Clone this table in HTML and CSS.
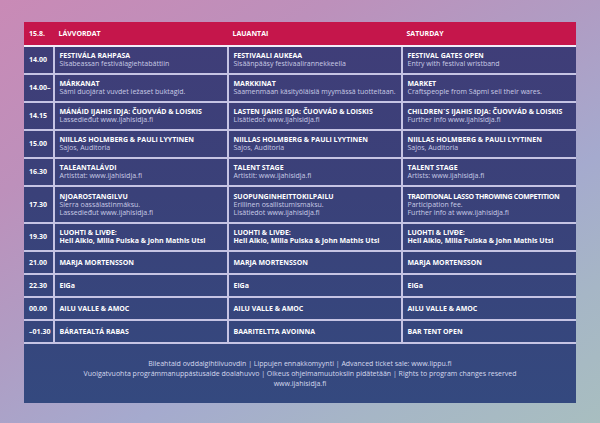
FILE: index.html
```html
<!DOCTYPE html>
<html lang="fi">
<head>
<meta charset="utf-8">
<title>Ijahis Idja – ohjelma</title>
<link rel="stylesheet" href="styles.css">
</head>
<body>
<div class="sheet">
  <table class="prog">
    <colgroup><col class="c-time"><col class="c-day"><col class="c-day"><col class="c-day"></colgroup>
    <thead>
      <tr><th class="time">15.8.</th><th>LÁVVORDAT</th><th>LAUANTAI</th><th>SATURDAY</th></tr>
    </thead>
    <tbody>
      <tr class="r2">
        <td class="time">14.00</td>
        <td><b>FESTIVÁLA RAHPASA</b><span>Sisabeassan festiválagiehtabáttiin</span></td>
        <td><b>FESTIVAALI AUKEAA</b><span>Sisäänpääsy festivaalirannekkeella</span></td>
        <td><b>FESTIVAL GATES OPEN</b><span>Entry with festival wristband</span></td>
      </tr>
      <tr class="r2">
        <td class="time">14.00–</td>
        <td><b>MÁRKANAT</b><span>Sámi duojárat vuvdet iežaset buktagid.</span></td>
        <td><b>MARKKINAT</b><span>Saamenmaan käsityöläisiä myymässä tuotteitaan.</span></td>
        <td><b>MARKET</b><span>Craftspeople from Sápmi sell their wares.</span></td>
      </tr>
      <tr class="r2">
        <td class="time">14.15</td>
        <td><b>MÁNÁID IJAHIS IDJA: ČUOVVÁD &amp; LOISKIS</b><span>Lassedieđut www.ijahisidja.fi</span></td>
        <td><b>LASTEN IJAHIS IDJA: ČUOVVÁD &amp; LOISKIS</b><span>Lisätiedot www.ijahisidja.fi</span></td>
        <td><b>CHILDREN´S IJAHIS IDJA: ČUOVVÁD &amp; LOISKIS</b><span>Further info www.ijahisidja.fi</span></td>
      </tr>
      <tr class="r2">
        <td class="time">15.00</td>
        <td><b>NIILLAS HOLMBERG &amp; PAULI LYYTINEN</b><span>Sajos, Auditoria</span></td>
        <td><b>NIILLAS HOLMBERG &amp; PAULI LYYTINEN</b><span>Sajos, Auditoria</span></td>
        <td><b>NIILLAS HOLMBERG &amp; PAULI LYYTINEN</b><span>Sajos, Auditoria</span></td>
      </tr>
      <tr class="r2">
        <td class="time">16.30</td>
        <td><b>TALEANTALÁVDI</b><span>Artisttat: www.ijahisidja.fi</span></td>
        <td><b>TALENT STAGE</b><span>Artistit: www.ijahisidja.fi</span></td>
        <td><b>TALENT STAGE</b><span>Artists: www.ijahisidja.fi</span></td>
      </tr>
      <tr class="r3">
        <td class="time">17.30</td>
        <td><b>NJOAROSTANGILVU</b><span>Sierra oassálastinmáksu.</span><span>Lassedieđut www.ijahisidja.fi</span></td>
        <td><b>SUOPUNGINHEITTOKILPAILU</b><span>Erillinen osallistumismaksu.</span><span>Lisätiedot www.ijahisidja.fi</span></td>
        <td><b class="tight">TRADITIONAL LASSO THROWING COMPETITION</b><span>Participation fee.</span><span>Further info at www.ijahisidja.fi</span></td>
      </tr>
      <tr class="r2">
        <td class="time">19.30</td>
        <td><b>LUOHTI &amp; LIVĐE:</b><b>Heli Aikio, Milla Pulska &amp; John Mathis Utsi</b></td>
        <td><b>LUOHTI &amp; LIVĐE:</b><b>Heli Aikio, Milla Pulska &amp; John Mathis Utsi</b></td>
        <td><b>LUOHTI &amp; LIVĐE:</b><b>Heli Aikio, Milla Pulska &amp; John Mathis Utsi</b></td>
      </tr>
      <tr class="r1">
        <td class="time">21.00</td>
        <td><b>MARJA MORTENSSON</b></td>
        <td><b>MARJA MORTENSSON</b></td>
        <td><b>MARJA MORTENSSON</b></td>
      </tr>
      <tr class="r1">
        <td class="time">22.30</td>
        <td><b>EiGa</b></td>
        <td><b>EiGa</b></td>
        <td><b>EiGa</b></td>
      </tr>
      <tr class="r1">
        <td class="time">00.00</td>
        <td><b>AILU VALLE &amp; AMOC</b></td>
        <td><b>AILU VALLE &amp; AMOC</b></td>
        <td><b>AILU VALLE &amp; AMOC</b></td>
      </tr>
      <tr class="r1">
        <td class="time">–01.30</td>
        <td><b>BÁRATEALTÁ RABAS</b></td>
        <td><b>BAARITELTTA AVOINNA</b></td>
        <td><b>BAR TENT OPEN</b></td>
      </tr>
    </tbody>
  </table>
  <footer class="foot">
    <p>Bileahtaid ovddalgihtiivuovdin | Lippujen ennakkomyynti | Advanced ticket sale: www.lippu.fi</p>
    <p>Vuoigatvuohta prográmmanuppástusaide doalahuvvo | Oikeus ohjelmamuutoksiin pidätetään | Rights to program changes reserved</p>
    <p>www.ijahisidja.fi</p>
  </footer>
</div>
</body>
</html>
```

FILE: styles.css
```css
html, body {
  margin: 0;
  padding: 0;
}
body {
  width: 600px;
  height: 423px;
  overflow: hidden;
  font-family: "Open Sans", "Noto Sans", "DejaVu Sans", sans-serif;
  font-size: 7px;
  line-height: 8px;
  color: #ffffff;
  background: linear-gradient(150deg, #c98ab6 0%, #bd90bb 25%, #b09cc3 45%, #a5aace 65%, #a6b6c6 82%, #a8bec0 100%);
}
.sheet {
  margin: 22px 0 0 24px;
  width: 552px;
  background: linear-gradient(180deg, #403d78 0%, #3a4179 45%, #34497f 100%);
}
.prog {
  width: 552px;
  border-collapse: collapse;
  table-layout: fixed;
}
.c-time { width: 30px; }
.c-day { width: 174px; }
.prog thead th {
  background: #c5164b;
  height: 23px;
  padding: 0 0 0 4.5px;
  text-align: left;
  font-weight: 700;
  vertical-align: middle;
  border-bottom: 2px solid #f1eef8;
}
.prog thead th.time { padding-left: 5px; }
.prog td {
  padding: 0 0 0 4.5px;
  vertical-align: middle;
  border-bottom: 2px solid #c6c4e4;
  border-left: 2px solid #c6c4e4;
  color: #c9cbe6;
}
.prog td.time {
  border-left: none;
  padding-left: 5px;
  font-weight: 700;
  color: #ffffff;
}
.prog td b {
  display: block;
  font-weight: 700;
  color: #ffffff;
}
.prog td b.tight {
  letter-spacing: -0.3px;
}
.prog td span {
  display: block;
}
.r1 { height: 23px; }
.r2 { height: 28px; }
.r3 { height: 37px; }
.foot {
  height: 59px;
  display: flex;
  flex-direction: column;
  justify-content: center;
  align-items: center;
  color: #d6d9ee;
  font-size: 7px;
  line-height: 10px;
}
.foot p {
  margin: 0;
  text-align: center;
}
```
